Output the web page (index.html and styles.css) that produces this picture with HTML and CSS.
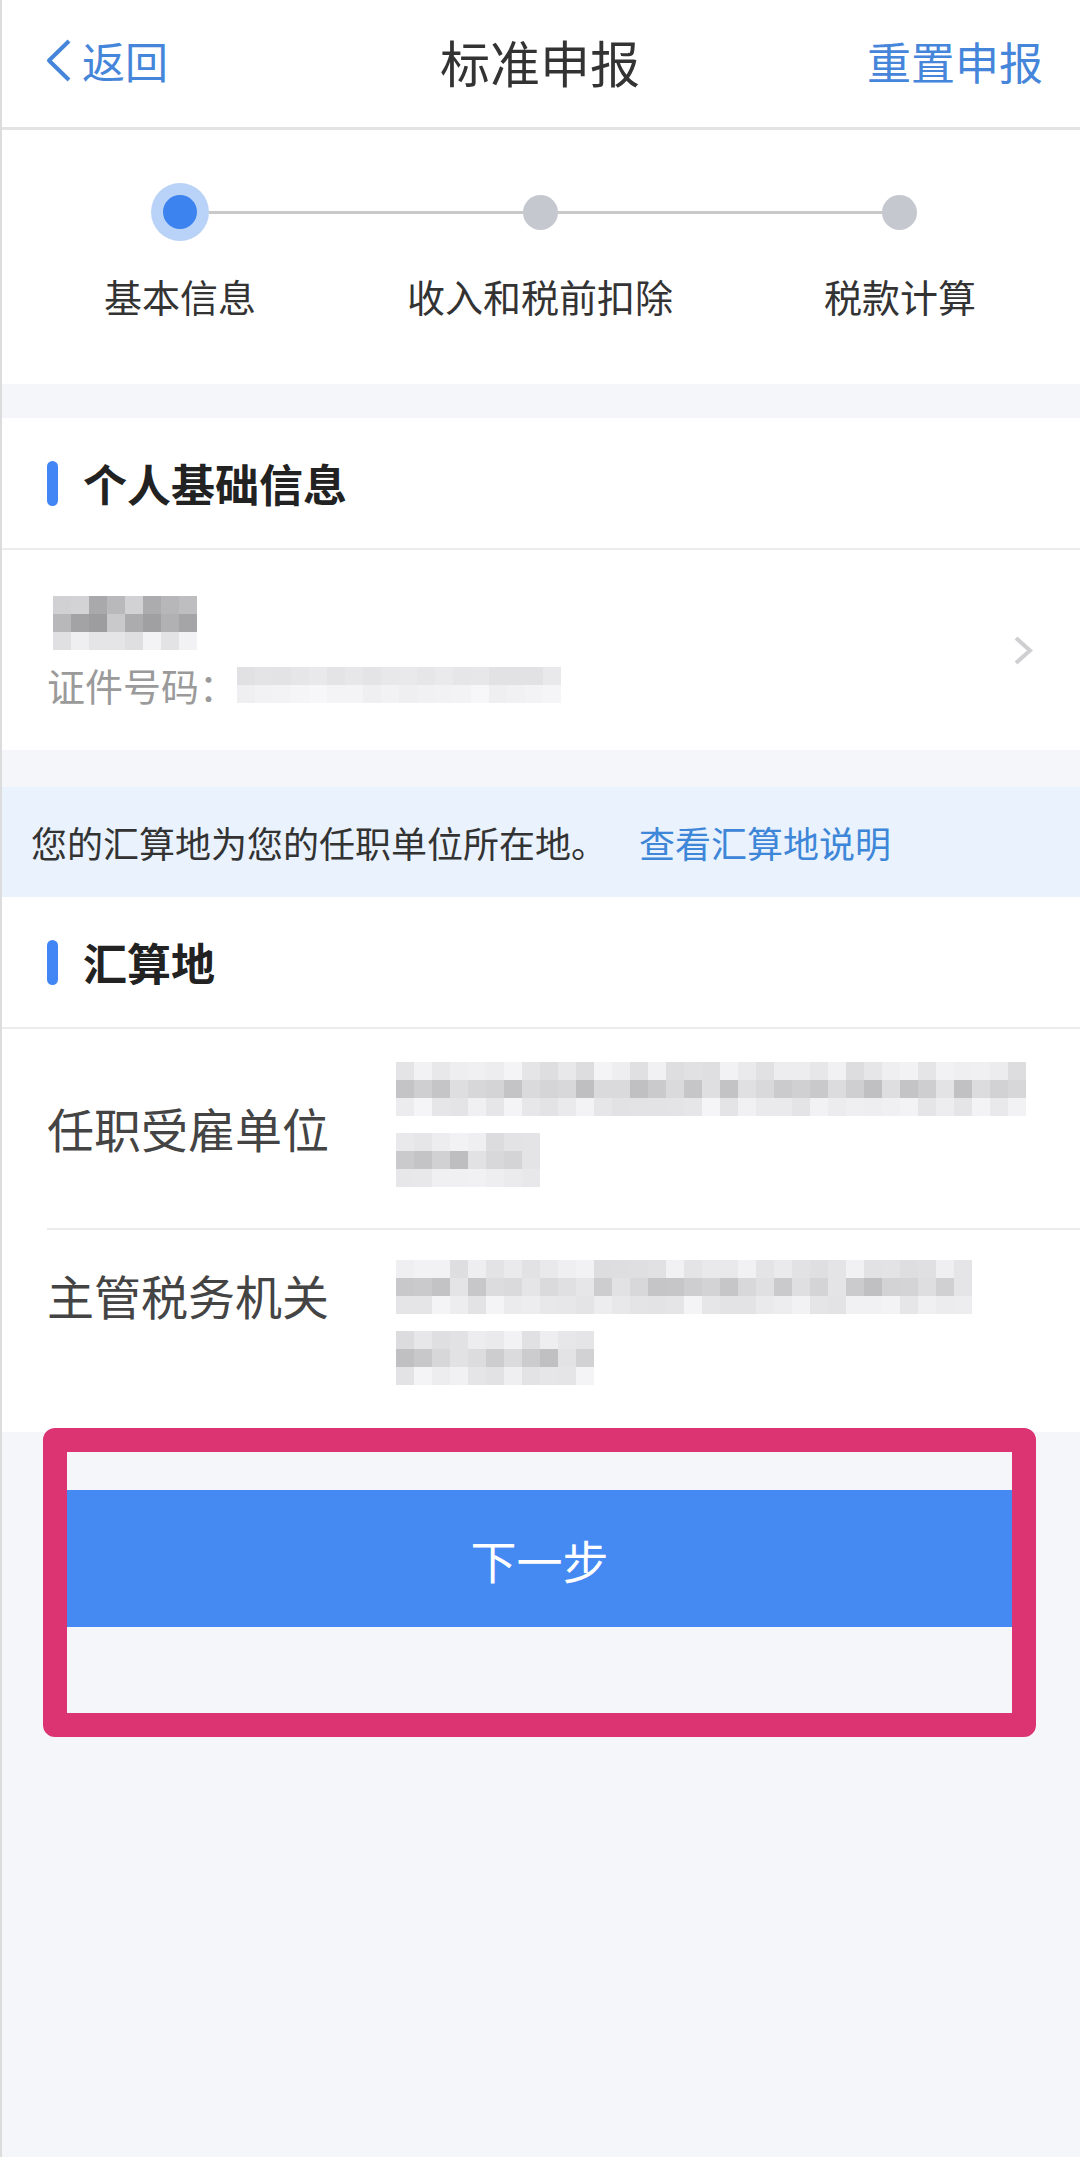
FILE: index.html
```html
<!DOCTYPE html>
<html lang="zh-CN">
<head>
  <meta charset="UTF-8">
  <meta name="viewport" content="width=device-width, initial-scale=1.0">
  <title>标准申报</title>
  <link rel="stylesheet" href="styles.css">
</head>
<body>

  <div class="nav">
    <a class="nav-back">
      <svg width="27" height="43" viewBox="0 0 27 43"><path d="M24 2 L4 21.5 L24 41" fill="none" stroke="#4585da" stroke-width="4" stroke-linejoin="round"/></svg>
      <span>返回</span>
    </a>
    <div class="nav-title">标准申报</div>
    <a class="nav-action">重置申报</a>
  </div>

  <div class="steps">
    <div class="step-track">
      <span class="dot-active"></span>
      <span class="step-line first"></span>
      <span class="dot"></span>
      <span class="step-line second"></span>
      <span class="dot"></span>
    </div>
    <div class="step-labels">
      <span>基本信息</span>
      <span>收入和税前扣除</span>
      <span>税款计算</span>
    </div>
  </div>

  <div class="card">
    <div class="card-head">个人基础信息</div>
    <div class="person">
      <div class="person-info">
        <div class="mosaic name-blur" data-cols="8" data-tone="name"></div>
        <div class="id-line">
          <span>证件号码：</span>
          <div class="mosaic" data-cols="18" data-tone="id"></div>
        </div>
      </div>
      <svg width="20" height="31" viewBox="0 0 20 31"><path d="M3 3 L17 15.5 L3 28" fill="none" stroke="#cfcfd2" stroke-width="4"/></svg>
    </div>
  </div>

  <div class="notice">
    您的汇算地为您的任职单位所在地。<a class="notice-link">查看汇算地说明</a>
  </div>

  <div class="card">
    <div class="card-head">汇算地</div>
    <div class="field field-employer">
      <div class="field-label">任职受雇单位</div>
      <div class="field-value">
        <div class="mosaic" data-cols="35" data-tone="text"></div>
        <div class="mosaic" data-cols="8" data-tone="text"></div>
      </div>
    </div>
    <div class="field field-office">
      <div class="field-label">主管税务机关</div>
      <div class="field-value">
        <div class="mosaic" data-cols="32" data-tone="text"></div>
        <div class="mosaic" data-cols="11" data-tone="text"></div>
      </div>
    </div>
  </div>

  <div class="next-wrap">
    <div class="next-btn">下一步</div>
  </div>

  <script>
    // blurred personal data, drawn as gray mosaic cells
    const tones = {
      name: [[165, 215], [150, 205], [222, 246]],
      id: [[224, 234], [238, 247]],
      text: [[220, 244], [190, 230], [226, 245]]
    };

    document.querySelectorAll('.mosaic').forEach((el, i) => {
      const cols = +el.dataset.cols;
      const rows = tones[el.dataset.tone];
      let seed = 17 + i * 131;
      const rand = () => {
        seed = (seed * 9301 + 49297) % 233280;
        return seed / 233280;
      };
      el.style.gridTemplateColumns = `repeat(${cols}, 18px)`;
      rows.forEach(([lo, hi]) => {
        for (let c = 0; c < cols; c++) {
          const v = Math.round(lo + rand() * (hi - lo));
          const cell = document.createElement('span');
          cell.style.background = `rgb(${v}, ${v}, ${v + 2})`;
          el.appendChild(cell);
        }
      });
    });
  </script>
</body>
</html>
```

FILE: styles.css
```css
body {
  margin: 0;
  background-color: #f4f6fa;
  font-family: "Noto Sans CJK SC", "Noto Sans", sans-serif;
  color: #333;
}

body::after {
  content: "";
  position: fixed;
  top: 0;
  bottom: 0;
  left: 0;
  width: 2px;
  background-color: #dcdcdc;
}

a {
  text-decoration: none;
}

.nav {
  height: 130px;
  box-sizing: border-box;
  padding: 0 37px 6px;
  display: grid;
  grid-template-columns: 1fr auto 1fr;
  align-items: center;
  background-color: #fff;
  border-bottom: 3px solid #e3e3e3;
}

.nav-back {
  display: flex;
  align-items: center;
  gap: 10px;
  margin-left: 8px;
  color: #4585da;
  font-size: 43px;
  line-height: 1;
}

.nav-title {
  font-size: 50px;
  line-height: 1;
  color: #333;
}

.nav-action {
  justify-self: end;
  font-size: 44px;
  line-height: 1;
  color: #4585da;
}

.steps {
  height: 254px;
  box-sizing: border-box;
  padding-top: 53px;
  background-color: #fff;
}

.step-track {
  display: flex;
  align-items: center;
  height: 58px;
  padding-left: 151px;
}

.dot-active {
  width: 58px;
  height: 58px;
  border-radius: 50%;
  background-color: #b9d2f7;
  display: flex;
  align-items: center;
  justify-content: center;
}

.dot-active::before {
  content: "";
  width: 34px;
  height: 34px;
  border-radius: 50%;
  background-color: #3d83f0;
}

.dot {
  width: 35px;
  height: 35px;
  border-radius: 50%;
  background-color: #c5c8cf;
}

.step-line {
  height: 3px;
  background-color: #c9c9c9;
}

.step-line.first {
  width: 314px;
}

.step-line.second {
  width: 324px;
}

.step-labels {
  display: grid;
  grid-template-columns: repeat(3, 1fr);
  margin-top: 36px;
  font-size: 38px;
  line-height: 1;
  text-align: center;
  color: #333;
}

.card {
  margin-top: 34px;
  background-color: #fff;
}

.notice + .card {
  margin-top: 0;
}

.card-head {
  height: 132px;
  box-sizing: border-box;
  display: flex;
  align-items: center;
  gap: 25px;
  padding-left: 47px;
  border-bottom: 2px solid #ececec;
  font-size: 44px;
  font-weight: bold;
  line-height: 1;
  color: #222;
}

.card-head::before {
  content: "";
  width: 11px;
  height: 45px;
  border-radius: 6px;
  background-color: #4285f4;
}

.mosaic {
  display: grid;
  grid-auto-rows: 18px;
}

.mosaic span {
  display: block;
}

.person {
  height: 200px;
  box-sizing: border-box;
  display: flex;
  align-items: center;
  justify-content: space-between;
  padding: 0 47px;
}

.name-blur {
  margin-left: 6px;
}

.id-line {
  display: flex;
  align-items: center;
  margin-top: 16px;
  font-size: 38px;
  line-height: 1;
  color: #9a9a9a;
}

.notice {
  height: 110px;
  box-sizing: border-box;
  margin-top: 37px;
  display: flex;
  align-items: center;
  padding-left: 31px;
  background-color: #e9f2fd;
  font-size: 36px;
  line-height: 1;
  color: #333;
}

.notice-link {
  margin-left: 32px;
  color: #3d86d8;
}

.field {
  display: flex;
  align-items: flex-start;
  margin-left: 47px;
}

.field-employer {
  padding: 33px 0 41px;
}

.field-office {
  padding: 30px 0 47px;
  border-top: 2px solid #ececec;
}

.field-label {
  width: 349px;
  flex-shrink: 0;
  font-size: 47px;
  line-height: 1;
  color: #444;
}

.field-employer .field-label {
  margin-top: 42px;
}

.field-office .field-label {
  margin-top: 11px;
}

.field-value {
  display: flex;
  flex-direction: column;
  gap: 17px;
}

.next-wrap {
  position: relative;
  margin: -4px 44px 0 43px;
  padding: 38px 0 86px;
  border: 24px solid #dc3373;
  border-radius: 12px;
}

.next-btn {
  height: 137px;
  display: flex;
  align-items: center;
  justify-content: center;
  background-color: #4589f3;
  color: #fff;
  font-size: 46px;
  line-height: 1;
}
```
